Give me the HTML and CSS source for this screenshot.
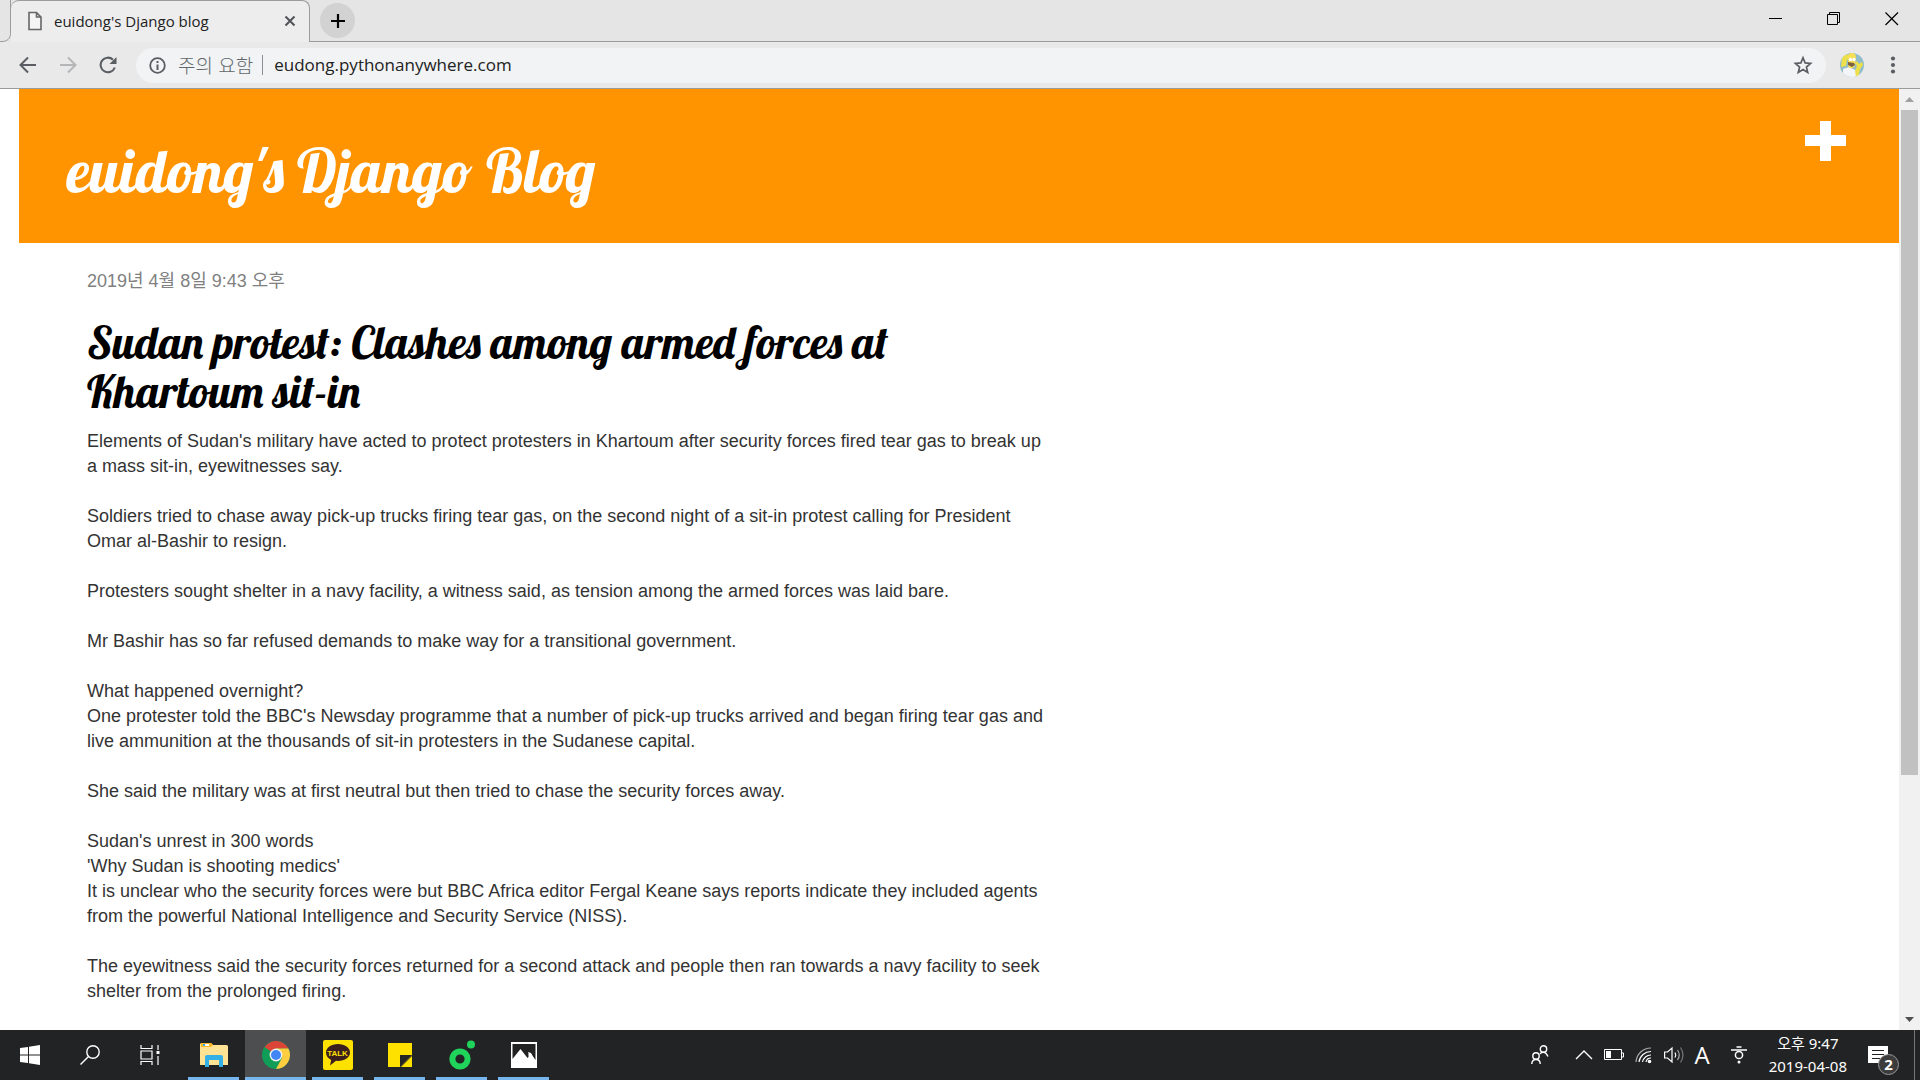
FILE: index.html
```html
<!DOCTYPE html>
<html lang="ko">
<head>
<meta charset="utf-8">
<title>euidong's Django blog</title>
<link rel="stylesheet" href="styles.css">
</head>
<body>
<div class="desktop">
  <header class="browser">
    <div class="tabstrip">
      <svg class="tab-foot" width="11" height="42" viewBox="0 0 11 42"><path d="M0 41.500h2c5 0 8.500-3 8.500-8V0" fill="none" stroke="#9b9b9b"/></svg>
      <div class="tab">
        <svg width="14" height="20" viewBox="0 0 14 20"><path d="M1 1.500h7.500L13 6v12.500H1zM8.500 1.500V6H13" fill="#fff" fill-opacity=".4" stroke="#666" stroke-width="1.600"/></svg>
        <span class="tab-title">euidong's Django blog</span>
        <button class="icon-button" aria-label="탭 닫기"><svg width="12" height="12" viewBox="0 0 12 12"><path d="M1.500 1.500l9 9M10.500 1.500l-9 9" stroke="#505357" stroke-width="2"/></svg></button>
      </div>
      <div class="strip-rest">
        <button class="new-tab" aria-label="새 탭"><svg width="16" height="16" viewBox="0 0 16 16"><path d="M8 1v14M1 8h14" stroke="#000" stroke-width="2.200"/></svg></button>
        <div class="window-controls">
          <button class="icon-button" aria-label="최소화"><svg width="14" height="14" viewBox="0 0 14 14"><path d="M0 6.500h13" stroke="#000"/></svg></button>
          <button class="icon-button" aria-label="이전 크기로 복원"><svg width="14" height="14" viewBox="0 0 14 14"><path d="M.5 2.500h10v10H.5zM2.500 2.500v-2h10v10h-2" fill="none" stroke="#000"/></svg></button>
          <button class="icon-button" aria-label="닫기"><svg width="14" height="14" viewBox="0 0 14 14"><path d="M.5.5l12.500 12.500M13 .5L.5 13" stroke="#000" stroke-width="1.200"/></svg></button>
        </div>
      </div>
    </div>
    <div class="toolbar">
      <nav class="nav-buttons">
        <button class="icon-button" aria-label="뒤로"><svg width="18" height="18" viewBox="0 0 18 18"><path d="M17 9H2M9 1.500L1.500 9 9 16.500" fill="none" stroke="#5a5e63" stroke-width="2"/></svg></button>
        <button class="icon-button" aria-label="앞으로"><svg width="18" height="18" viewBox="0 0 18 18"><path d="M1 9h15M9 1.500L16.500 9 9 16.500" fill="none" stroke="#b5b6b8" stroke-width="2"/></svg></button>
        <button class="icon-button" aria-label="새로고침"><svg width="18" height="18" viewBox="0 0 18 18"><path d="M15.800 11.500A7.300 7.300 0 1 1 14 3.700" fill="none" stroke="#5a5e63" stroke-width="2.100"/><path d="M17.500 1v7h-7z" fill="#5a5e63"/></svg></button>
      </nav>
      <div class="omnibox">
        <svg width="17" height="17" viewBox="0 0 17 17"><circle cx="8.500" cy="8.500" r="7.300" fill="none" stroke="#5a5e63" stroke-width="1.800"/><path d="M8.500 7.500V13M8.500 4v2" stroke="#5a5e63" stroke-width="2"/></svg>
        <label class="security" for="url">주의 요함</label>
        <input class="url" id="url" type="text" value="eudong.pythonanywhere.com">
        <button class="icon-button" aria-label="북마크"><svg width="20" height="20" viewBox="0 0 20 20"><path d="M10 2.800l2.100 5.100 5.500.5-4.200 3.600 1.300 5.400L10 14.500l-4.700 2.900L6.600 12 2.400 8.400l5.500-.5z" fill="none" stroke="#5a5e63" stroke-width="1.700"/></svg></button>
      </div>
      <button class="icon-button" aria-label="프로필"><svg width="24" height="26" viewBox="0 0 24 26"><defs><clipPath id="avatar"><circle cx="12" cy="13" r="12"/></clipPath></defs><g clip-path="url(#avatar)"><path fill="#91bcc9" d="M0 0h24v26H0z"/><path d="M3 17l6-2 8 4 2 7H3z" fill="#f4f5fa"/><path d="M1 15L2 6l3-4 4 1 1 2-3 3-1 6zM15 19l2-5-2-3 2-2 2 3 3-2 1 3-3 4-1 6-3 2z" fill="#eee04a"/><path d="M8 4c1-5 8-4 8 1l-1 8c-1 5-8 4-7-1z" fill="#f7df55"/><circle cx="10.500" cy="7.500" r="1.700" fill="#fff"/><circle cx="14" cy="7.500" r="1.700" fill="#fff"/><path d="M8 10l6 1 1 2-3 2-4-2z" fill="#7c6040"/></g></svg></button>
      <button class="icon-button" aria-label="메뉴"><svg width="6" height="18" viewBox="0 0 6 18"><g fill="#5a5e63"><circle cx="3" cy="2.500" r="2.100"/><circle cx="3" cy="9" r="2.100"/><circle cx="3" cy="15.500" r="2.100"/></g></svg></button>
    </div>
  </header>

  <div class="viewport">
    <div class="page">
      <div class="page-header">
        <h1><a href="/">euidong's Django Blog</a></h1>
        <a class="add-post" href="/post/new/" aria-label="새 글"><svg width="41" height="40" viewBox="0 0 41 40"><path d="M15 0h11v14h15v11H26v15H15V25H0V14h15z" fill="#fff"/></svg></a>
      </div>
      <main class="content">
        <article class="post">
          <time class="date">2019년 4월 8일 9:43 오후</time>
          <h2><a href="/post/1/">Sudan protest: Clashes among armed forces at Khartoum sit-in</a></h2>
          <p>Elements of Sudan's military have acted to protect protesters in Khartoum after security forces fired tear gas to break up a mass sit-in, eyewitnesses say.</p>
          <p>Soldiers tried to chase away pick-up trucks firing tear gas, on the second night of a sit-in protest calling for President Omar al-Bashir to resign.</p>
          <p>Protesters sought shelter in a navy facility, a witness said, as tension among the armed forces was laid bare.</p>
          <p>Mr Bashir has so far refused demands to make way for a transitional government.</p>
          <p>What happened overnight?<br>One protester told the BBC's Newsday programme that a number of pick-up trucks arrived and began firing tear gas and live ammunition at the thousands of sit-in protesters in the Sudanese capital.</p>
          <p>She said the military was at first neutral but then tried to chase the security forces away.</p>
          <p>Sudan's unrest in 300 words<br>'Why Sudan is shooting medics'<br>It is unclear who the security forces were but BBC Africa editor Fergal Keane says reports indicate they included agents from the powerful National Intelligence and Security Service (NISS).</p>
          <p>The eyewitness said the security forces returned for a second attack and people then ran towards a navy facility to seek shelter from the prolonged firing.</p>
        </article>
      </main>
    </div>
    <div class="scrollbar">
      <svg width="9" height="5" viewBox="0 0 9 5"><path d="M0 5l4.500-5L9 5z" fill="#a0a0a0"/></svg>
      <div class="track"><div class="thumb"></div></div>
      <svg width="9" height="5" viewBox="0 0 9 5"><path d="M0 0l4.500 5L9 0z" fill="#505050"/></svg>
    </div>
  </div>

  <footer class="taskbar">
    <div class="system">
      <button class="task" aria-label="시작"><svg width="20" height="20" viewBox="0 0 20 20"><path d="M0 3l8-1v7.500H0zM9 1.800L20 0v9.500H9zM0 10.500h8V18l-8-1zM9 10.500h11V20L9 18.300z" fill="#fff"/></svg></button>
      <button class="task" aria-label="검색"><svg width="20" height="20" viewBox="0 0 20 20"><g fill="none" stroke="#fff" stroke-width="1.400"><circle cx="13" cy="7" r="6.200"/><path d="M8.500 11.500L.5 19.500"/></g></svg></button>
      <button class="task" aria-label="작업 보기"><svg width="21" height="20" viewBox="0 0 21 20"><g fill="none" stroke="#fff" stroke-width="1.200"><path d="M1 0v3.500h11V0M1 6h11v8H1zM1 20v-3.500h11V20M18 0v5M18 11v9"/></g><path d="M16.500 6h3v3h-3z" fill="#fff"/></svg></button>
    </div>
    <div class="apps">
      <button class="task running" aria-label="파일 탐색기"><svg width="28" height="24" viewBox="0 0 28 24"><path d="M0 1.500Q0 0 1.500 0H11l2 2h13.500Q28 2 28 3.500V22H0z" fill="#ffe394"/><path d="M1 0h10l2 2-2 2H1z" fill="#f9b928"/><path d="M3 1h6v2H3z" fill="#fff"/><path d="M3 1h2v2H3z" fill="#36a9e1"/><path d="M5 24V14q0-2 2-2h14q2 0 2 2v10h-4v-7H9v7z" fill="#35b0e6"/></svg></button>
      <button class="task running active" aria-label="Chrome"><svg width="28" height="28" viewBox="0 0 28 28"><circle cx="14" cy="14" r="14" fill="#0f9d58"/><path d="M14 14L2.600 6A14 14 0 0 1 26.400 7.500H14z" fill="#db4437"/><path d="M14 7.500h12.400A14 14 0 0 1 14 28L20 17z" fill="#ffcd40"/><circle cx="14" cy="14" r="6.400" fill="#f1f1f1"/><circle cx="14" cy="14" r="5" fill="#4285f4"/></svg></button>
      <button class="task running" aria-label="카카오톡"><span class="talk"><svg width="24" height="22" viewBox="0 0 24 22"><path d="M12 0C5 0 0 3.700 0 8.500c0 3.300 2 6 5.200 7.400L4 21.500l6-4.700 2 .2c7 0 12-3.700 12-8.500S19 0 12 0z" fill="#3b1e1e"/></svg><span class="talk-label">TALK</span></span></button>
      <button class="task running" aria-label="스티커 메모"><svg width="24" height="24" viewBox="0 0 24 24"><path d="M0 0h24v12L12 24H0z" fill="#ffe100"/><path d="M12 12h12L12 24z" fill="#252525"/><path d="M24 13v11H13z" fill="#ffe100"/></svg></button>
      <button class="task running" aria-label="음악"><svg width="26" height="30" viewBox="0 0 26 30"><circle cx="11" cy="19" r="7.600" fill="none" stroke="#20d35a" stroke-width="6"/><circle cx="22" cy="4.500" r="4" fill="#20d35a"/></svg></button>
      <button class="task running" aria-label="사진"><svg width="26" height="26" viewBox="0 0 26 26"><path d="M0 0h26v26H0z" fill="#fff"/><path d="M1.500 2h23v16l-5-7-2 1v3l-1 1-7-9-8 10z" fill="#222"/><path d="M17 10l3 1 4 8-2 0-3-3z" fill="#fff"/></svg></button>
    </div>
    <div class="tray">
      <button class="tray-icon people" aria-label="피플"><svg width="18" height="20" viewBox="0 0 18 20"><g fill="none" stroke="#fff" stroke-width="1.400"><circle cx="12.500" cy="4" r="3.200"/><circle cx="5" cy="11" r="3.200"/><path d="M.8 19q0-4.500 4.200-4.500T9.200 19M9 9q1-1.800 3.500-1.800T17 11.500"/></g></svg></button>
      <button class="tray-icon chevron" aria-label="숨겨진 아이콘"><svg width="18" height="10" viewBox="0 0 18 10"><path d="M1 9l8-8 8 8" fill="none" stroke="#fff" stroke-width="1.400"/></svg></button>
      <button class="tray-icon" aria-label="배터리"><svg width="20" height="12" viewBox="0 0 20 12"><path d="M.5.500h17v10H.5zM18 4h1.500v4H18" fill="none" stroke="#fff"/><path d="M2 2h5v7H2z" fill="#fff"/></svg></button>
      <button class="tray-icon" aria-label="네트워크"><svg width="18" height="18" viewBox="0 0 18 18"><g fill="none" stroke="#fff" stroke-width="1.200"><path d="M1 16A15 15 0 0 1 16 2" stroke="#aaa"/><path d="M4 16A12 12 0 0 1 16 5.500M7.500 16A8.500 8.500 0 0 1 16 9M11 16a5 5 0 0 1 5-4"/></g><circle cx="14.500" cy="15.500" r="1.800" fill="#fff"/></svg></button>
      <button class="tray-icon" aria-label="소리"><svg width="20" height="18" viewBox="0 0 20 18"><g fill="none" stroke="#fff" stroke-width="1.200"><path d="M.6 6h3L8 2v14l-4.400-4h-3z"/><path d="M11 6.500q1.500 2.500 0 5"/><path d="M13.500 4q3.500 5 0 10" stroke="#aaa"/><path d="M16.500 1.500q5 7.500 0 15" stroke="#777"/></g></svg></button>
      <button class="tray-icon ime">A</button>
      <button class="tray-icon" aria-label="한/영"><svg width="16" height="18" viewBox="0 0 16 18"><g fill="none" stroke="#fff" stroke-width="1.500"><path d="M5.500 1h5M0 4h16"/><circle cx="8" cy="9" r="3.600"/></g><circle cx="8" cy="16" r="1.500" fill="#fff"/></svg></button>
      <button class="clock"><span>오후 9:47</span><span>2019-04-08</span></button>
      <button class="notices" aria-label="알림 2개"><svg width="20" height="21" viewBox="0 0 20 21"><path d="M0 0h20v17h-5l-4 4v-4H0z" fill="#fff"/><path d="M4 4.500h12M4 8.500h12M4 12.500h8" stroke="#222" stroke-width="1.200"/></svg><span class="badge">2</span></button>
    </div>
  </footer>
</div>
</body>
</html>
```
FILE: styles.css
```css
* { box-sizing: border-box; }

body {
  margin: 0;
  font-family: "Liberation Sans", "Noto Sans CJK KR", sans-serif;
  color: #333;
}

button {
  padding: 0;
  border: 0;
  background: none;
  font: inherit;
  color: inherit;
}

svg { display: block; flex: none; }
a { text-decoration: none; color: inherit; }

.desktop {
  display: grid;
  grid-template-rows: auto minmax(0, 1fr) auto;
  height: 100vh;
}

.browser { background: #e9e9e9; border-bottom: 1px solid #9b9b9b; }
.icon-button { display: flex; align-items: center; justify-content: center; }

.tabstrip { display: flex; height: 42px; background: #e5e5e5; }

.tab {
  display: flex;
  align-items: center;
  width: 299px;
  padding: 0 13px 2px 17px;
  border-top: 1px solid #9b9b9b;
  border-right: 1px solid #9b9b9b;
  border-radius: 8px 8px 0 0;
  background: #ededed;
}

.tab-title {
  flex: 1;
  padding-left: 12px;
  font: 15px "Open Sans", "Noto Sans", sans-serif;
  color: #222;
}

.strip-rest {
  display: flex;
  flex: 1;
  align-items: center;
  justify-content: space-between;
  padding: 0 21px 0 10px;
  border-bottom: 1px solid #9b9b9b;
}

.new-tab {
  display: flex;
  align-items: center;
  justify-content: center;
  width: 35px;
  height: 35px;
  border-radius: 50%;
  background: #d2d2d2;
}

.window-controls { display: flex; gap: 44px; padding-bottom: 4px; }

.toolbar {
  display: flex;
  align-items: center;
  gap: 14px;
  height: 46px;
  padding: 0 24px 0 19px;
}

.toolbar > .icon-button:last-child { margin-left: 12px; }
.nav-buttons { display: flex; gap: 22px; margin-right: 5px; }

.omnibox {
  display: flex;
  flex: 1;
  align-items: center;
  height: 35px;
  padding: 0 13px;
  border-radius: 18px;
  background: #f1f3f4;
}

.security {
  margin: 0 11px 0 12px;
  padding-right: 9px;
  border-right: 1px solid #8b8e92;
  font: 300 19px/20px "Noto Sans CJK KR", sans-serif;
  color: #63676b;
}

.url {
  flex: 1;
  padding: 0 0 2px;
  border: 0;
  background: none;
  font: 17px "Open Sans", "Noto Sans", sans-serif;
  color: #222;
}

.viewport { display: flex; background: #fff; }
.page { flex: 1; padding-left: 19px; overflow: hidden; }

.page-header {
  display: flex;
  align-items: flex-start;
  justify-content: space-between;
  height: 154px;
  padding: 32px 53px 0 48px;
  background: #ff9400;
}

h1, h2 { margin: 0; font-family: Lobster, "Liberation Serif", serif; font-weight: 500; }
h1 { padding-top: 14px; font-size: 60px; line-height: 72px; color: #fff; }
h2 { padding: 24px 0 13px; font-size: 45px; line-height: 49px; color: #000; }

.content { padding: 26px 68px; }
.post { max-width: 962px; font-size: 18px; line-height: 25px; }
.date { display: block; color: #808080; }
.post p { margin: 0 0 25px; }

.scrollbar {
  display: flex;
  flex-direction: column;
  align-items: center;
  gap: 8px;
  width: 21px;
  padding: 8px 0;
  background: #f1f1f1;
}

.track { flex: 1; width: 17px; }
.thumb { height: 74%; background: #c1c1c1; }

.taskbar { display: flex; height: 50px; background: #222324; color: #fff; }
.system { display: flex; }
.apps { display: flex; gap: 11px; padding-left: 8px; }

.task { display: flex; align-items: center; justify-content: center; width: 60px; }
.task.running { width: 51px; border-bottom: 3px solid #76b5ee; padding-top: 3px; }
.task.active { width: 61px; margin: 0 -5px; background: #4c4e50; }

.talk {
  display: grid;
  place-items: center;
  width: 30px;
  height: 30px;
  border-radius: 2px;
  background: #fde200;
}

.talk > * { grid-area: 1 / 1; }
.talk-label { padding-bottom: 3px; font-size: 8px; font-weight: 700; line-height: 10px; color: #fde200; }

.tray { display: flex; align-items: center; gap: 11px; margin-left: auto; padding-right: 5px; }
.tray-icon { display: flex; }
.tray-icon.people { margin-right: 15px; }
.ime { margin-right: 10px; font: 24px/24px "Open Sans", sans-serif; }

.clock {
  display: flex;
  flex-direction: column;
  align-items: center;
  margin: 0 10px 0 11px;
  font: 15px/23px "Noto Sans", "Noto Sans CJK KR", sans-serif;
}

.notices {
  position: relative;
  height: 50px;
  padding: 3px 26px 0 0;
  border-right: 1px solid #777;
}

.badge {
  position: absolute;
  top: 24px;
  left: 10px;
  width: 21px;
  height: 21px;
  border: 1px solid #999;
  border-radius: 50%;
  background: #3c3c3c;
  font: 700 15px/19px "Noto Sans", sans-serif;
}
```
